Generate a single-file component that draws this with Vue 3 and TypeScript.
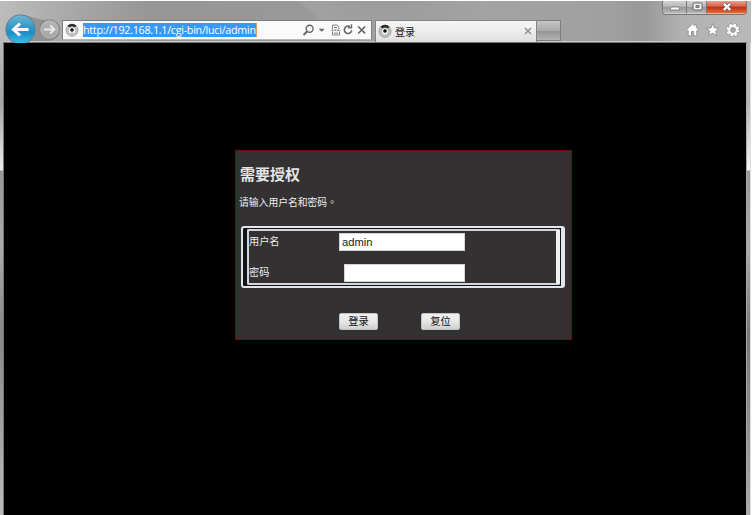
<script setup lang="ts">
import { ref } from 'vue'

const address = 'http://192.168.1.1/cgi-bin/luci/admin'
const username = ref('admin')
const password = ref('')

function reset(): void {
  username.value = 'admin'
  password.value = ''
}
</script>

<template>
  <div class="window">
    <header class="chrome">
      <nav class="nav">
        <svg class="nav-icons" width="62" height="30" viewBox="0 0 62 30">
          <defs>
            <linearGradient id="blue" x1="0" y1="0" x2="0" y2="1">
              <stop offset="0" stop-color="#6fb6d3" />
              <stop offset=".4" stop-color="#359bc8" />
              <stop offset=".6" stop-color="#1c8ec4" />
              <stop offset="1" stop-color="#3fc0f0" />
            </linearGradient>
            <linearGradient id="grey" x1="0" y1="0" x2="0" y2="1">
              <stop offset="0" stop-color="#b5b5b5" />
              <stop offset="1" stop-color="#a4a4a4" />
            </linearGradient>
          </defs>
          <path d="M20 1C31 1 35 6 49 6Q60 7 60 16T49 27H20Z" fill="#929292" />
          <circle cx="20.5" cy="15.5" r="14.7" fill="url(#blue)" stroke="#637f8b" stroke-width="1" />
          <path d="M28.5 15.5H14M20 9.5L13.5 15.5L20 21.5" fill="none" stroke="#fff" stroke-width="3" />
          <circle cx="49.5" cy="15.5" r="9.7" fill="url(#grey)" stroke="#858585" stroke-width="1.2" />
          <circle cx="49.5" cy="15.5" r="8.7" fill="none" stroke="#c6c6c6" stroke-width=".7" />
          <path d="M44 15.5H54M50.2 11.5L54.3 15.5L50.2 19.5" fill="none" stroke="#e9e9e9" stroke-width="2" />
        </svg>
      </nav>

      <div class="address">
        <svg class="favicon" width="14" height="14" viewBox="0 0 14 14">
          <circle cx="7" cy="7.3" r="6" fill="#cfcfcf" stroke="#a2a2a2" />
          <circle cx="7" cy="7.5" r="3.9" fill="#f8f8f8" stroke="#a0a0a0" stroke-width=".8" />
          <path d="M2.4 2.8Q7-1.3 11.6 2.8L9.8 4.2Q7 2.8 4.2 4.2Z" fill="#343434" />
          <circle cx="7" cy="7" r="1.8" fill="#090909" />
          <path d="M7 7V11" stroke="#777" stroke-width=".7" />
        </svg>
        <span class="url">{{ address }}</span>
        <svg class="tools" width="66" height="16" viewBox="0 0 66 16">
          <g fill="none" stroke="#646464" stroke-width="1.4">
            <circle cx="7.6" cy="6.7" r="3.5" />
            <path d="M5 9.5L1.5 13" stroke-width="1.8" />
            <path d="M30.5 7V3H35L37 5V7M30.5 9.5V13H37.5V9.5M32 5.5H35M32 11.2H36" stroke="#808080" stroke-width="1" />
            <path d="M29.5 8.2H38.5" stroke="#909090" stroke-width="1.4" stroke-dasharray="2 .7" />
            <path d="M48 4.7A3.7 3.7 0 1 0 49.7 8.3" stroke-width="1.6" />
            <path d="M45.9 5.9H49.5V2.2" />
            <path d="M56.2 4.5L63.2 11.5M63.2 4.5L56.2 11.5" stroke-width="1.7" />
          </g>
          <path d="M16.7 6.8H22.7L19.7 9.8Z" fill="#666" />
        </svg>
      </div>

      <div class="tab">
        <svg class="favicon" width="14" height="14" viewBox="0 0 14 14">
          <circle cx="7" cy="7.3" r="6" fill="#c4c4c4" stroke="#9d9d9d" />
          <circle cx="7" cy="7.5" r="3.9" fill="#f0f0f0" stroke="#989898" stroke-width=".8" />
          <path d="M2.4 2.8Q7-1.3 11.6 2.8L9.8 4.2Q7 2.8 4.2 4.2Z" fill="#292929" />
          <circle cx="7" cy="7" r="1.8" fill="#080808" />
        </svg>
        <span class="tab-title">登录</span>
        <svg width="8" height="8" viewBox="0 0 8 8">
          <path d="M1 1L7 7M7 1L1 7" stroke="#909090" stroke-width="1.5" />
        </svg>
      </div>
      <div class="new-tab"></div>

      <div class="corner">
        <div class="caption">
          <div class="caption-button">
            <svg width="12" height="10" viewBox="0 0 12 10"><rect x="1.5" y="5" width="9" height="3" rx=".8" fill="#fff" stroke="#686868" stroke-width=".8" /></svg>
          </div>
          <div class="caption-button">
            <svg width="12" height="10" viewBox="0 0 12 10"><rect x="2" y="1" width="9" height="7" rx="1" fill="#f5f5f5" stroke="#5f5f69" /><rect x="5" y="3.5" width="3" height="2" fill="#aaa" stroke="#5f5f69" stroke-width=".8" /></svg>
          </div>
          <div class="caption-button close">
            <svg width="12" height="10" viewBox="0 0 12 10"><path d="M2.5 1.5L9.5 8.2M9.5 1.5L2.5 8.2" stroke="#705c60" stroke-width="3.6" /><path d="M2.8 1.8L9.2 7.9M9.2 1.8L2.8 7.9" stroke="#fff" stroke-width="2.2" /></svg>
          </div>
        </div>
        <svg class="commands" width="56" height="16" viewBox="0 0 56 16">
          <g stroke="#858585" stroke-width=".8" fill="#fff">
            <path d="M1.5 7.8L7.5 1.8L9.5 3.7V2.6H11.3V5.5L13.5 7.8L12.2 9L11.8 8.6V13.8H8.7V9.5H6.5V13.8H3.2V8.6L2.8 9Z" />
            <path d="M27.7 1.5L29.5 6L34 6.2L30.6 9.1L31.8 13.7L27.7 11.1L23.6 13.7L24.8 9.1L21.4 6.2L25.9 6Z" />
          </g>
          <circle cx="48" cy="8" r="5.6" fill="none" stroke="#858585" stroke-width="3" stroke-dasharray="2.9 1.5" />
          <circle cx="48" cy="8" r="5.4" fill="none" stroke="#fff" stroke-width="2.2" stroke-dasharray="2.35 1.89" />
          <circle cx="48" cy="8" r="3.7" fill="none" stroke="#fff" stroke-width="2" />
          <circle cx="48" cy="8" r="2.4" fill="#a9a9a9" stroke="#858585" stroke-width=".6" />
        </svg>
      </div>
    </header>

    <div class="body">
      <div class="edge"></div>
      <main class="page">
        <form class="dialog" @submit.prevent>
          <h1>需要授权</h1>
          <p>请输入用户名和密码<span class="stop">。</span></p>
          <div class="frame">
            <div class="fields">
              <label class="row"><span>用户名</span><input v-model="username" type="text" /></label>
              <label class="row second"><span>密码</span><input v-model="password" type="password" /></label>
            </div>
          </div>
          <div class="actions">
            <button type="submit">登录</button>
            <button type="button" @click="reset">复位</button>
          </div>
        </form>
      </main>
      <div class="edge right"></div>
    </div>
  </div>
</template>

<style>
body {
  background: #fff;
  overflow: hidden;
}
</style>

<style scoped>
* {
  box-sizing: border-box;
}

.window {
  width: 752px;
  height: 515px;
  padding: 1px 1px 0 0;
  display: flex;
  flex-direction: column;
  font-family: "Liberation Sans", "Noto Sans CJK SC", sans-serif;
  background: #fff;
}

.chrome {
  height: 42px;
  flex: none;
  display: flex;
  align-items: flex-start;
  background:
    linear-gradient(#c8c8c8, #c8c8c8) 3px 40px / 744px 1px no-repeat,
    linear-gradient(#777, #777) 3px 41px / 744px 1px no-repeat,
    linear-gradient(40deg, transparent 43%, #ffffff16 44%, transparent 56%),
    linear-gradient(90deg, #bcbcbc 0, #a6a6a6 80px, #969696 150px, #999 360px, #a3a3a3 480px, #a0a0a0 610px, #999 645px, #b1b1b1 680px, #b9b9b9 751px);
}

.nav {
  width: 62px;
  height: 42px;
  padding-top: 13px;
  overflow: hidden;
}

.nav-icons {
  display: block;
}

.address {
  width: 310px;
  height: 20px;
  margin-top: 19px;
  padding: 0 3px 0 2px;
  display: flex;
  align-items: center;
  background: #fafafa;
  border: 1px solid #7d7d7d;
  border-bottom-color: #b7b7b7;
}

.favicon {
  flex: none;
}

.url {
  width: 174px;
  height: 14px;
  margin-left: 4px;
  font: 10.8px/14px "Open Sans", sans-serif;
  letter-spacing: -0.3px;
  white-space: nowrap;
  color: #fff;
  background: #3898f6;
  border-right: 1px solid #e79b4e;
}

.tools {
  margin-left: auto;
  flex: none;
}

.tab {
  width: 162px;
  height: 22px;
  margin: 19px 0 0 3px;
  padding: 0 4px 1px 2px;
  display: flex;
  align-items: center;
  color: #151515;
  background: linear-gradient(#f5f5f5, #ededed 50%, #dedede);
  border: 1px solid #858585;
  border-bottom: 0;
}

.tab-title {
  margin: 1px auto 0 3px;
  font: 10px/14px "Noto Sans CJK SC", sans-serif;
}

.new-tab {
  width: 24px;
  height: 21px;
  margin-top: 19px;
  background: linear-gradient(#c6c6c6, #aaa 50%, #949494 55%, #b4b4b4);
  border: 1px solid #7d7d7d;
  border-left: 0;
}

.corner {
  margin-left: auto;
  padding-right: 4px;
  display: flex;
  flex-direction: column;
  align-items: flex-end;
}

.caption {
  width: 85px;
  height: 14px;
  display: flex;
  border: 1px solid #777;
  border-top: 0;
  border-radius: 0 0 4px 4px;
  overflow: hidden;
}

.caption-button {
  width: 24px;
  display: flex;
  align-items: center;
  justify-content: center;
  background: linear-gradient(#d1d1d1, #bababa 45%, #969696 50%, #b8b8b8);
  border-right: 1px solid #797979;
  border-bottom: 1px solid #d0d0d0;
}

.caption-button + .caption-button {
  width: 20px;
}

.caption-button.caption-button.close {
  width: 39px;
  background: linear-gradient(#e9a18e, #d65d48 45%, #bd2d13 50%, #e56c36);
  border-right: 0;
  border-bottom-color: #edaf93;
}

.commands {
  margin: 7px 6px 0 0;
}

.body {
  flex: 1;
  display: flex;
  min-height: 0;
}

.edge {
  width: 4px;
  background:
    linear-gradient(90deg, transparent 75%, #777 75%),
    linear-gradient(#b8b8b8 0, #a5a5a5 60px, #ececec 127px, #979797 128px, #aaa 205px, #888 290px, #adadad 420px, #bbb 472px);
}

.edge.right {
  width: 5px;
  background:
    linear-gradient(90deg, #aaa 20%, transparent 20% 80%, #ddd 80%),
    linear-gradient(#b8b8b8 0, #b5b5b5 60px, #f5f5f5 127px, #979797 128px, #aaa 205px, #777 290px, #999 420px, #aaa 472px);
}

.page {
  flex: 1;
  padding-top: 107px;
  background: #000;
}

.dialog {
  width: 337px;
  height: 190px;
  margin-left: 231px;
  background: #333132;
  border: 1px solid #6f0b10;
  color: #eee;
}

h1 {
  margin: 13px 0 0 4px;
  font: bold 15px/20px "Noto Sans CJK SC", sans-serif;
  color: #e5e5e5;
}

p {
  margin: 10px 0 0 3px;
  font: 9.8px/16px "Noto Sans CJK SC", sans-serif;
}

.stop {
  font-family: "Noto Sans CJK TC", sans-serif;
}

.frame {
  width: 324px;
  height: 62px;
  margin: 16px 0 0 5px;
  padding: 1px;
  background: #14151b;
  border: 2px solid #e2e5ea;
  border-width: 2px 4px 2px 2px;
  border-radius: 3px;
}

.fields {
  height: 56px;
  margin-left: 3px;
  padding-top: 2px;
  background: #333132;
  border: 2px solid #d2d6dc;
  border-right: 4px solid #eef0f2;
  border-radius: 2px;
}

.row {
  height: 18px;
  display: flex;
  justify-content: space-between;
  padding-right: 91px;
  font: 10.2px/16px "Noto Sans CJK SC", sans-serif;
}

.row.second {
  margin-top: 13px;
}

input {
  width: 126px;
  height: 18px;
  padding: 1px 2px;
  font: 11.2px "Liberation Sans", sans-serif;
  color: #222;
  background: #fff;
  border: 1px solid #d4d4d4;
  outline: 0;
}

.second input {
  width: 121px;
}

.actions {
  display: flex;
  gap: 43px;
  margin: 25px 0 0 103px;
}

button {
  width: 39px;
  height: 17px;
  padding: 0 0 2px;
  font: 10.3px/13px "Noto Sans CJK SC", sans-serif;
  color: #111;
  background: linear-gradient(#f1f1f1, #e7e7e7 50%, #cfcfcf);
  border: 1px solid #c2c2c2;
  border-radius: 2px;
}
</style>
